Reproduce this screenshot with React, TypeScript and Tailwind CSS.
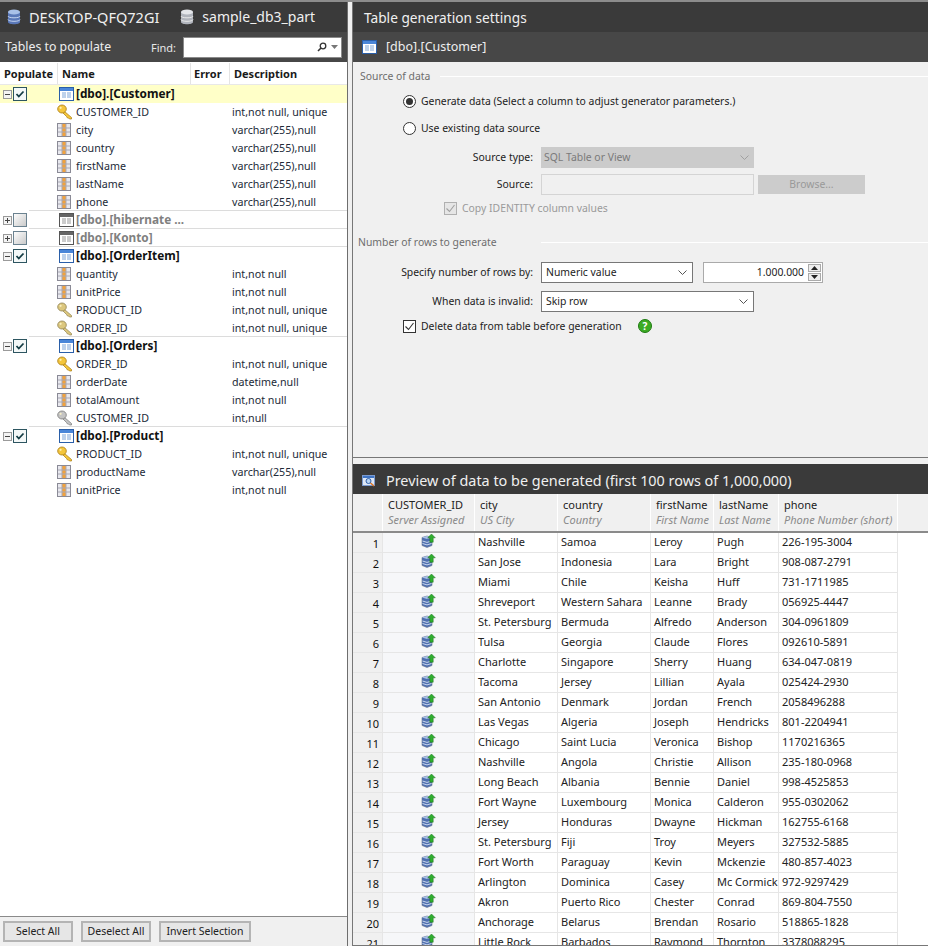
import React from 'react';

const FONT = "font-['Noto_Sans','DejaVu_Sans',sans-serif]";

type Col = { name: string; desc: string; icon: 'col' | 'key' | 'paleKey' | 'greyKey' };
type Group = { name: string; on: boolean; selected?: boolean; cols: Col[] };

const vc = 'varchar(255),null';
const groups: Group[] = [
  {
    name: '[dbo].[Customer]', on: true, selected: true,
    cols: [
      { name: 'CUSTOMER_ID', desc: 'int,not null, unique', icon: 'key' },
      { name: 'city', desc: vc, icon: 'col' },
      { name: 'country', desc: vc, icon: 'col' },
      { name: 'firstName', desc: vc, icon: 'col' },
      { name: 'lastName', desc: vc, icon: 'col' },
      { name: 'phone', desc: vc, icon: 'col' },
    ],
  },
  { name: '[dbo].[hibernate ...', on: false, cols: [] },
  { name: '[dbo].[Konto]', on: false, cols: [] },
  {
    name: '[dbo].[OrderItem]', on: true,
    cols: [
      { name: 'quantity', desc: 'int,not null', icon: 'col' },
      { name: 'unitPrice', desc: 'int,not null', icon: 'col' },
      { name: 'PRODUCT_ID', desc: 'int,not null, unique', icon: 'paleKey' },
      { name: 'ORDER_ID', desc: 'int,not null, unique', icon: 'paleKey' },
    ],
  },
  {
    name: '[dbo].[Orders]', on: true,
    cols: [
      { name: 'ORDER_ID', desc: 'int,not null, unique', icon: 'key' },
      { name: 'orderDate', desc: 'datetime,null', icon: 'col' },
      { name: 'totalAmount', desc: 'int,not null', icon: 'col' },
      { name: 'CUSTOMER_ID', desc: 'int,null', icon: 'greyKey' },
    ],
  },
  {
    name: '[dbo].[Product]', on: true,
    cols: [
      { name: 'PRODUCT_ID', desc: 'int,not null, unique', icon: 'key' },
      { name: 'productName', desc: vc, icon: 'col' },
      { name: 'unitPrice', desc: 'int,not null', icon: 'col' },
    ],
  },
];

const rows = [
  ['Nashville', 'Samoa', 'Leroy', 'Pugh', '226-195-3004'],
  ['San Jose', 'Indonesia', 'Lara', 'Bright', '908-087-2791'],
  ['Miami', 'Chile', 'Keisha', 'Huff', '731-1711985'],
  ['Shreveport', 'Western Sahara', 'Leanne', 'Brady', '056925-4447'],
  ['St. Petersburg', 'Bermuda', 'Alfredo', 'Anderson', '304-0961809'],
  ['Tulsa', 'Georgia', 'Claude', 'Flores', '092610-5891'],
  ['Charlotte', 'Singapore', 'Sherry', 'Huang', '634-047-0819'],
  ['Tacoma', 'Jersey', 'Lillian', 'Ayala', '025424-2930'],
  ['San Antonio', 'Denmark', 'Jordan', 'French', '2058496288'],
  ['Las Vegas', 'Algeria', 'Joseph', 'Hendricks', '801-2204941'],
  ['Chicago', 'Saint Lucia', 'Veronica', 'Bishop', '1170216365'],
  ['Nashville', 'Angola', 'Christie', 'Allison', '235-180-0968'],
  ['Long Beach', 'Albania', 'Bennie', 'Daniel', '998-4525853'],
  ['Fort Wayne', 'Luxembourg', 'Monica', 'Calderon', '955-0302062'],
  ['Jersey', 'Honduras', 'Dwayne', 'Hickman', '162755-6168'],
  ['St. Petersburg', 'Fiji', 'Troy', 'Meyers', '327532-5885'],
  ['Fort Worth', 'Paraguay', 'Kevin', 'Mckenzie', '480-857-4023'],
  ['Arlington', 'Dominica', 'Casey', 'Mc Cormick', '972-9297429'],
  ['Akron', 'Puerto Rico', 'Chester', 'Conrad', '869-804-7550'],
  ['Anchorage', 'Belarus', 'Brendan', 'Rosario', '518865-1828'],
  ['Little Rock', 'Barbados', 'Raymond', 'Thornton', '3378088295'],
];

const TableIcon = ({ grey }: { grey?: boolean }) => (
  <svg width="15" height="14" viewBox="0 0 15 14" className="shrink-0">
    <rect x="0.5" y="0.5" width="14" height="13" fill="#fff" stroke={grey ? '#555' : '#2a5ea8'} />
    <rect x="1" y="1" width="13" height="3" fill={grey ? '#666' : '#4a86d8'} />
    <path d="M3 6h4M8 6h4M3 8h4M8 8h4M3 10h4M8 10h4" stroke={grey ? '#999' : '#7fa6d8'} strokeWidth="1.2" />
  </svg>
);

const ColIcon = () => (
  <svg width="14" height="14" viewBox="0 0 14 14" className="shrink-0">
    <rect x="0.5" y="0.5" width="13" height="13" fill="#e8e8ee" stroke="#8a8a96" />
    <rect x="5" y="1" width="4" height="12" fill="#f2a23c" />
    <path d="M1 5h12M1 9h12M5 1v12M9 1v12" stroke="#a8a8b4" />
  </svg>
);

const KeyIcon = ({ tone }: { tone: 'key' | 'paleKey' | 'greyKey' }) => {
  const c = { key: ['#f4c63c', '#a87a10'], paleKey: ['#dcc77e', '#8f8150'], greyKey: ['#c4c4c4', '#777'] }[tone];
  return (
    <svg width="17" height="16" viewBox="0 0 17 16" className="shrink-0">
      <path d="M7 7l7.5 6.5v1.5h-2l-1-1-1 0-1-1.5-3.5-3.5z" fill={c[0]} stroke={c[1]} strokeWidth="0.7" />
      <ellipse cx="5" cy="5" rx="4.3" ry="4" fill={c[0]} stroke={c[1]} strokeWidth="0.8" />
      <circle cx="3.6" cy="3.8" r="1.1" fill="#fff6c8" opacity="0.85" />
    </svg>
  );
};

const Expander = ({ open }: { open: boolean }) => (
  <svg width="9" height="9" viewBox="0 0 9 9" className="shrink-0">
    <rect x="0.5" y="0.5" width="8" height="8" fill="#f4f4f4" stroke="#9a9a9a" />
    <path d={open ? 'M2 4.5h5' : 'M2 4.5h5M4.5 2v5'} stroke="#444" />
  </svg>
);

const TreeCheck = ({ on }: { on: boolean }) => (
  <svg width="14" height="14" viewBox="0 0 14 14" className="shrink-0">
    <defs>
      <linearGradient id="uncheck" x1="0" y1="0" x2="1" y2="1">
        <stop offset="0" stopColor="#ffffff" />
        <stop offset="1" stopColor="#c8c8c8" />
      </linearGradient>
    </defs>
    <rect x="0.5" y="0.5" width="13" height="13" fill={on ? '#f4f8f8' : 'url(#uncheck)'} stroke={on ? '#2d5560' : '#6b8290'} />
    {on && <path d="M3.5 7l2.3 2.5 4.7-5" fill="none" stroke="#143c44" strokeWidth="1.8" />}
  </svg>
);

const Chevron = ({ color = '#555' }: { color?: string }) => (
  <svg width="9" height="5" viewBox="0 0 9 5" className="shrink-0">
    <path d="M0.5 0.5l4 4 4-4" fill="none" stroke={color} />
  </svg>
);

const DbIcon = ({ blue }: { blue?: boolean }) => (
  <svg width="14" height="16" viewBox="0 0 14 16" className="shrink-0">
    <path d="M1 3v10c0 3 12 3 12 0V3z" fill={blue ? '#5a78b8' : '#b0b4bc'} />
    <ellipse cx="7" cy="3" rx="6" ry="2.4" fill={blue ? '#a8c0e8' : '#e4e6ea'} />
    <path d="M1 7c0 2.4 12 2.4 12 0M1 10.5c0 2.4 12 2.4 12 0" fill="none" stroke={blue ? '#c4d4f0' : '#e8e8e8'} />
  </svg>
);

const ServerIcon = () => (
  <svg width="15" height="14" viewBox="0 0 15 14">
    <path d="M1 3.5l5-1.5 5 1.5v8l-5 2-5-2z" fill="#4f6fb0" stroke="#6a7690" strokeWidth="0.6" />
    <path d="M1 3.5l5-1.5 5 1.5-5 1.5z" fill="#a9c0e6" />
    <path d="M1.5 7l4.5 1.4 4.5-1.4M1.5 9.5l4.5 1.4 4.5-1.4" fill="none" stroke="#c8d6ee" />
    <path d="M10.5 0l3.800 3.800h-2.100v4.400H8.800V3.800H6.700z" fill="#2fae2f" stroke="#1f6f1f" strokeWidth="0.5" />
  </svg>
);

const PreviewIcon = () => (
  <svg width="14" height="14" viewBox="0 0 14 14" className="shrink-0">
    <rect x="0.5" y="1.5" width="12" height="10" fill="#dfe8f6" stroke="#7b9bd0" />
    <rect x="1" y="2" width="11" height="2" fill="#3f74c4" />
    <circle cx="6.5" cy="7" r="2.5" fill="#b8d4f4" stroke="#2f5ea8" />
    <path d="M8.5 9l3.500 3" stroke="#d8762a" strokeWidth="1.6" />
  </svg>
);

const HelpIcon = () => (
  <div className="flex h-[14px] w-[14px] shrink-0 items-center justify-center rounded-full border border-[#1f7a12] bg-[#3cab24] text-[10px] font-bold leading-none text-white">?</div>
);

const Radio = ({ on }: { on?: boolean }) => (
  <div className="flex h-[13px] w-[13px] shrink-0 items-center justify-center rounded-full border border-[#333] bg-white">
    {on && <div className="h-[7px] w-[7px] rounded-full bg-[#333]" />}
  </div>
);

const Check = ({ disabled }: { disabled?: boolean }) => (
  <svg width="13" height="13" viewBox="0 0 13 13" className="shrink-0">
    <rect x="0.5" y="0.5" width="12" height="12" fill={disabled ? '#e6e6e6' : '#fff'} stroke={disabled ? '#b0b0b0' : '#333'} />
    <path d="M2.500 6.500l3 3 5-6.500" fill="none" stroke={disabled ? '#a0a0a0' : '#333'} strokeWidth="1.1" />
  </svg>
);

const Legend = ({ label, width, left }: { label: string; width: string; left: string }) => (
  <div className={`flex h-[16px] items-center ${left}`}>
    <span className={`text-[#6d6d6d] ${width}`}>{label}</span>
    <div className="h-px flex-1 bg-white" />
  </div>
);

const Button = ({ label, width }: { label: string; width: string }) => (
  <div className={`flex h-[21px] items-center justify-center border-2 border-[#b4b4b4] bg-[#e6e6e6] text-[10.5px] text-[#222] ${width}`}>{label}</div>
);

const TreeRow = ({ children, cls = '' }: { children: React.ReactNode; cls?: string }) => (
  <div className={`flex h-[18px] items-center ${cls}`}>{children}</div>
);

const previewGrid = 'grid grid-cols-[30px_92px_83px_93px_63px_65px_119px]';

const App: React.FC = () => {
  let rowNum = 0;
  return (
    <div className={`flex h-[946px] w-[928px] flex-col overflow-hidden bg-[#f0f0f0] text-[11px] leading-none text-[#222] ${FONT}`}>
      <div className="h-[2px] shrink-0 bg-[#8c8c8c]" />
      <div className="flex min-h-0 flex-1">
        {/* left panel */}
        <div className="flex w-[348px] shrink-0 flex-col border-r border-[#6e6e6e]">
          <div className="flex h-[30px] shrink-0 items-center bg-[#3a3a3a] pl-[7px] text-[14.5px] text-[#f0f0f0]">
            <DbIcon blue />
            <span className="ml-[8px]">DESKTOP-QFQ72GI</span>
            <span className="ml-[21px]"><DbIcon /></span>
            <span className="ml-[8px] text-[14px]">sample_db3_part</span>
          </div>
          <div className="flex h-[30px] shrink-0 items-center bg-[#474747] pl-[5px] pr-[5px]">
            <span className="text-[12.3px] text-[#eee]">Tables to populate</span>
            <span className="ml-auto text-[#e8e8e8]">Find:</span>
            <div className="ml-[7px] flex h-[21px] w-[159px] items-center justify-end gap-[4px] border border-[#8a8a8a] bg-white pr-[3px]">
              <svg width="10" height="10" viewBox="0 0 10 10">
                <circle cx="6" cy="4" r="2.8" fill="none" stroke="#333" strokeWidth="1.3" />
                <path d="M4 6L1 9" stroke="#333" strokeWidth="1.6" />
              </svg>
              <svg width="7" height="4" viewBox="0 0 7 4"><path d="M0 0h7L3.500 4z" fill="#777" /></svg>
            </div>
          </div>
          <div className="flex min-h-0 flex-1 flex-col bg-white">
            <div className="mt-px grid h-[22px] shrink-0 grid-cols-[58px_133px_39px_117px] items-center border-b border-[#e8e8e8] font-bold text-[#1a1a1a]">
              <div className="flex h-full items-center border-r border-[#e4e4e4] pl-[4px]">Populate</div>
              <div className="flex h-full items-center border-r border-[#e4e4e4] pl-[4px]">Name</div>
              <div className="flex h-full items-center border-r border-[#e4e4e4] pl-[3px]">Error</div>
              <div className="flex h-full items-center pl-[4px]">Description</div>
            </div>
            {groups.map((g, i) => (
              <React.Fragment key={g.name}>
                <TreeRow cls={g.selected ? 'bg-[#ffffc8]' : ''}>
                  <div className="flex w-[59px] items-center pl-[3px]">
                    <Expander open={g.cols.length > 0} />
                    <span className="ml-[1px]"><TreeCheck on={g.on} /></span>
                  </div>
                  <TableIcon grey={!g.on} />
                  <span className={`ml-[2px] text-[11.8px] font-bold ${g.on ? 'text-[#111]' : 'text-[#808080]'}`}>{g.name}</span>
                </TreeRow>
                {g.cols.map((c) => (
                  <TreeRow key={c.name} cls="text-[10.7px]">
                    <div className="flex w-[76px] shrink-0 justify-end pr-[1px]">
                      <div className="flex w-[18px]">
                        {c.icon === 'col' ? <ColIcon /> : <KeyIcon tone={c.icon} />}
                      </div>
                    </div>
                    <span className="w-[156px] shrink-0 text-[#222a38]">{c.name}</span>
                    <span className="text-[#222a38]">{c.desc}</span>
                  </TreeRow>
                ))}
                {i < groups.length - 1 && <div className="-mt-px ml-[29px] h-px bg-[#dcdcdc]" />}
              </React.Fragment>
            ))}
          </div>
          <div className="flex h-[30px] shrink-0 items-center gap-[8px] border-t border-[#8a8a8a] pl-[3px]">
            <Button label="Select All" width="w-[70px]" />
            <Button label="Deselect All" width="w-[70px]" />
            <Button label="Invert Selection" width="w-[92px]" />
          </div>
        </div>

        {/* right panel */}
        <div className="ml-[4px] flex min-w-0 flex-1 flex-col border-l border-[#777]">
          <div className="flex h-[30px] shrink-0 items-center bg-[#3a3a3a] pl-[11px] pt-[2px] text-[13.7px] text-[#f0f0f0]">Table generation settings</div>
          <div className="flex h-[30px] shrink-0 items-center bg-[#474747] pl-[9px] text-[12.5px] text-[#eee]">
            <TableIcon />
            <span className="ml-[9px]">[dbo].[Customer]</span>
          </div>

          <div className="flex h-[396px] shrink-0 flex-col border-b border-[#777] text-[10.4px] text-[#222]">
            <div className="pt-[6px]"><Legend label="Source of data" width="w-[80px]" left="pl-[7px]" /></div>
            <div className="ml-[50px] mt-[9px] flex h-[16px] items-center gap-[5px]"><Radio on />Generate data (Select a column to adjust generator parameters.)</div>
            <div className="ml-[50px] mt-[11px] flex h-[16px] items-center gap-[5px]"><Radio />Use existing data source</div>
            <div className="mt-[11px] flex h-[21px] items-center">
              <span className="w-[180px] text-right">Source type:</span>
              <div className="ml-[8px] flex h-full w-[213px] items-center justify-between bg-[#cbcbcb] pl-[3px] pr-[5px] text-[#7a7a7a]">SQL Table or View<Chevron color="#a0a0a0" /></div>
            </div>
            <div className="mt-[6px] flex h-[21px] items-center">
              <span className="w-[180px] text-right">Source:</span>
              <div className="ml-[8px] h-full w-[213px] border border-[#d4d4d4] bg-[#f0f0f0]" />
              <div className="ml-[4px] flex h-[19px] w-[107px] items-center justify-center bg-[#cccccc] text-[#999]">Browse...</div>
            </div>
            <div className="ml-[91px] mt-[6px] flex h-[14px] items-center gap-[5px] text-[#9a9a9a]"><Check disabled />Copy IDENTITY column values</div>
            <div className="mt-[19px]"><Legend label="Number of rows to generate" width="w-[183px]" left="pl-[5px]" /></div>
            <div className="mt-[12px] flex h-[21px] items-center">
              <span className="w-[180px] text-right">Specify number of rows by:</span>
              <div className="ml-[8px] flex h-full w-[152px] items-center justify-between border border-[#777] bg-white pl-[4px] pr-[5px]">Numeric value<Chevron /></div>
              <div className="ml-[10px] flex h-full w-[120px] items-center justify-end border border-[#aaa] bg-white pr-px">
                <span className="mr-[4px]">1.000.000</span>
                <div className="flex h-[17px] w-[13px] flex-col gap-px">
                  <div className="flex flex-1 items-center justify-center border border-[#aaa] bg-[#eee]"><svg width="7" height="4" viewBox="0 0 7 4"><path d="M3.500 0L7 4H0z" fill="#222" /></svg></div>
                  <div className="flex flex-1 items-center justify-center border border-[#aaa] bg-[#eee]"><svg width="7" height="4" viewBox="0 0 7 4"><path d="M0 0h7L3.500 4z" fill="#222" /></svg></div>
                </div>
              </div>
            </div>
            <div className="mt-[8px] flex h-[21px] items-center">
              <span className="w-[180px] text-right">When data is invalid:</span>
              <div className="ml-[8px] flex h-full w-[213px] items-center justify-between border border-[#777] bg-white pl-[4px] pr-[5px]">Skip row<Chevron /></div>
            </div>
            <div className="ml-[50px] mt-[7px] flex h-[14px] items-center gap-[5px]">
              <Check />
              <span className="w-[212px] whitespace-nowrap">Delete data from table before generation</span>
              <HelpIcon />
            </div>
          </div>

          <div className="mt-[6px] flex h-[30px] shrink-0 items-center bg-[#3a3a3a] pl-[9px] pt-[4px] text-[14.4px] text-[#f0f0f0]">
            <PreviewIcon />
            <span className="ml-[10px]">Preview of data to be generated (first 100 rows of 1,000,000)</span>
          </div>

          <div className="min-h-0 flex-1 overflow-hidden border-b border-[#777] bg-white">
            <div className={`${previewGrid} h-[39px] border-b-2 border-[#8a8a8a] bg-[#f0f0f0]`}>
              <div className="border-r border-white" />
              {[
                ['CUSTOMER_ID', 'Server Assigned'],
                ['city', 'US City'],
                ['country', 'Country'],
                ['firstName', 'First Name'],
                ['lastName', 'Last Name'],
                ['phone', 'Phone Number (short)'],
              ].map(([a, b]) => (
                <div key={a} className="flex flex-col gap-[4px] overflow-hidden whitespace-nowrap border-r border-white pl-[5px] pt-[5px]">
                  <span className="text-[#222]">{a}</span>
                  <span className="italic text-[#8a8a8a]">{b}</span>
                </div>
              ))}
            </div>
            <div className="w-[545px]">
              {rows.map((r) => {
                rowNum += 1;
                return (
                  <div key={rowNum} className={`${previewGrid} h-[20px] border-b border-[#e6e6e6]`}>
                    <div className="flex items-center justify-end border-r border-[#e6e6e6] bg-[#f0f0f0] pr-[3px] pt-[2px] text-[#111]">{rowNum}</div>
                    <div className="flex justify-center border-r border-[#e6e6e6] bg-[#f6f7f9] pt-[1px]"><ServerIcon /></div>
                    {r.map((v, i) => (
                      <div key={i} className="flex items-center overflow-hidden whitespace-nowrap border-r border-[#e6e6e6] pb-[3px] pl-[3px] text-[#222]">{v}</div>
                    ))}
                  </div>
                );
              })}
            </div>
          </div>
        </div>
      </div>
    </div>
  );
};

export default App;
